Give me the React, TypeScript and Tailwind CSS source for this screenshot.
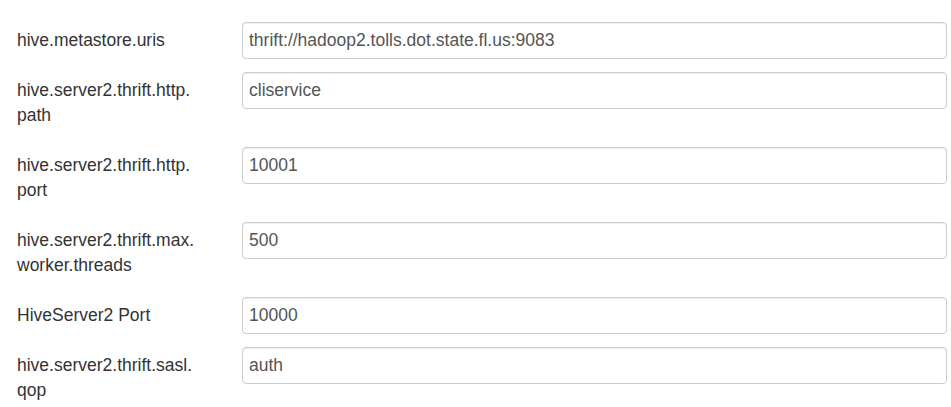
import React from "react";

const rows: { label: string[]; value: string }[] = [
  { label: ["hive.metastore.uris"], value: "thrift://hadoop2.tolls.dot.state.fl.us:9083" },
  { label: ["hive.server2.thrift.http.", "path"], value: "cliservice" },
  { label: ["hive.server2.thrift.http.", "port"], value: "10001" },
  { label: ["hive.server2.thrift.max.", "worker.threads"], value: "500" },
  { label: ["HiveServer2 Port"], value: "10000" },
  { label: ["hive.server2.thrift.sasl.", "qop"], value: "auth" },
];

export default function App() {
  return (
    <div
      className="w-[951px] h-[407px] overflow-hidden bg-white pt-[22px] pl-[17px] pr-[4px]"
      style={{ fontFamily: '"Liberation Sans", Arial, sans-serif' }}
    >
      <div className="flex flex-col gap-[13px]">
        {rows.map((r, i) => (
          <div key={i} className="flex items-start">
            <div className="w-[225px] shrink-0 py-[6px] text-[17.5px] leading-[25px] text-[#333]">
              {r.label.map((l, j) => (
                <div key={j}>{l}</div>
              ))}
            </div>
            <div className="flex-1 h-[37px] border border-[#ccc] rounded-[4px] bg-white shadow-[inset_0_1px_1px_rgba(0,0,0,0.075)] px-[6px] flex items-center text-[17.5px] text-[#555]">
              {r.value}
            </div>
          </div>
        ))}
      </div>
    </div>
  );
}
